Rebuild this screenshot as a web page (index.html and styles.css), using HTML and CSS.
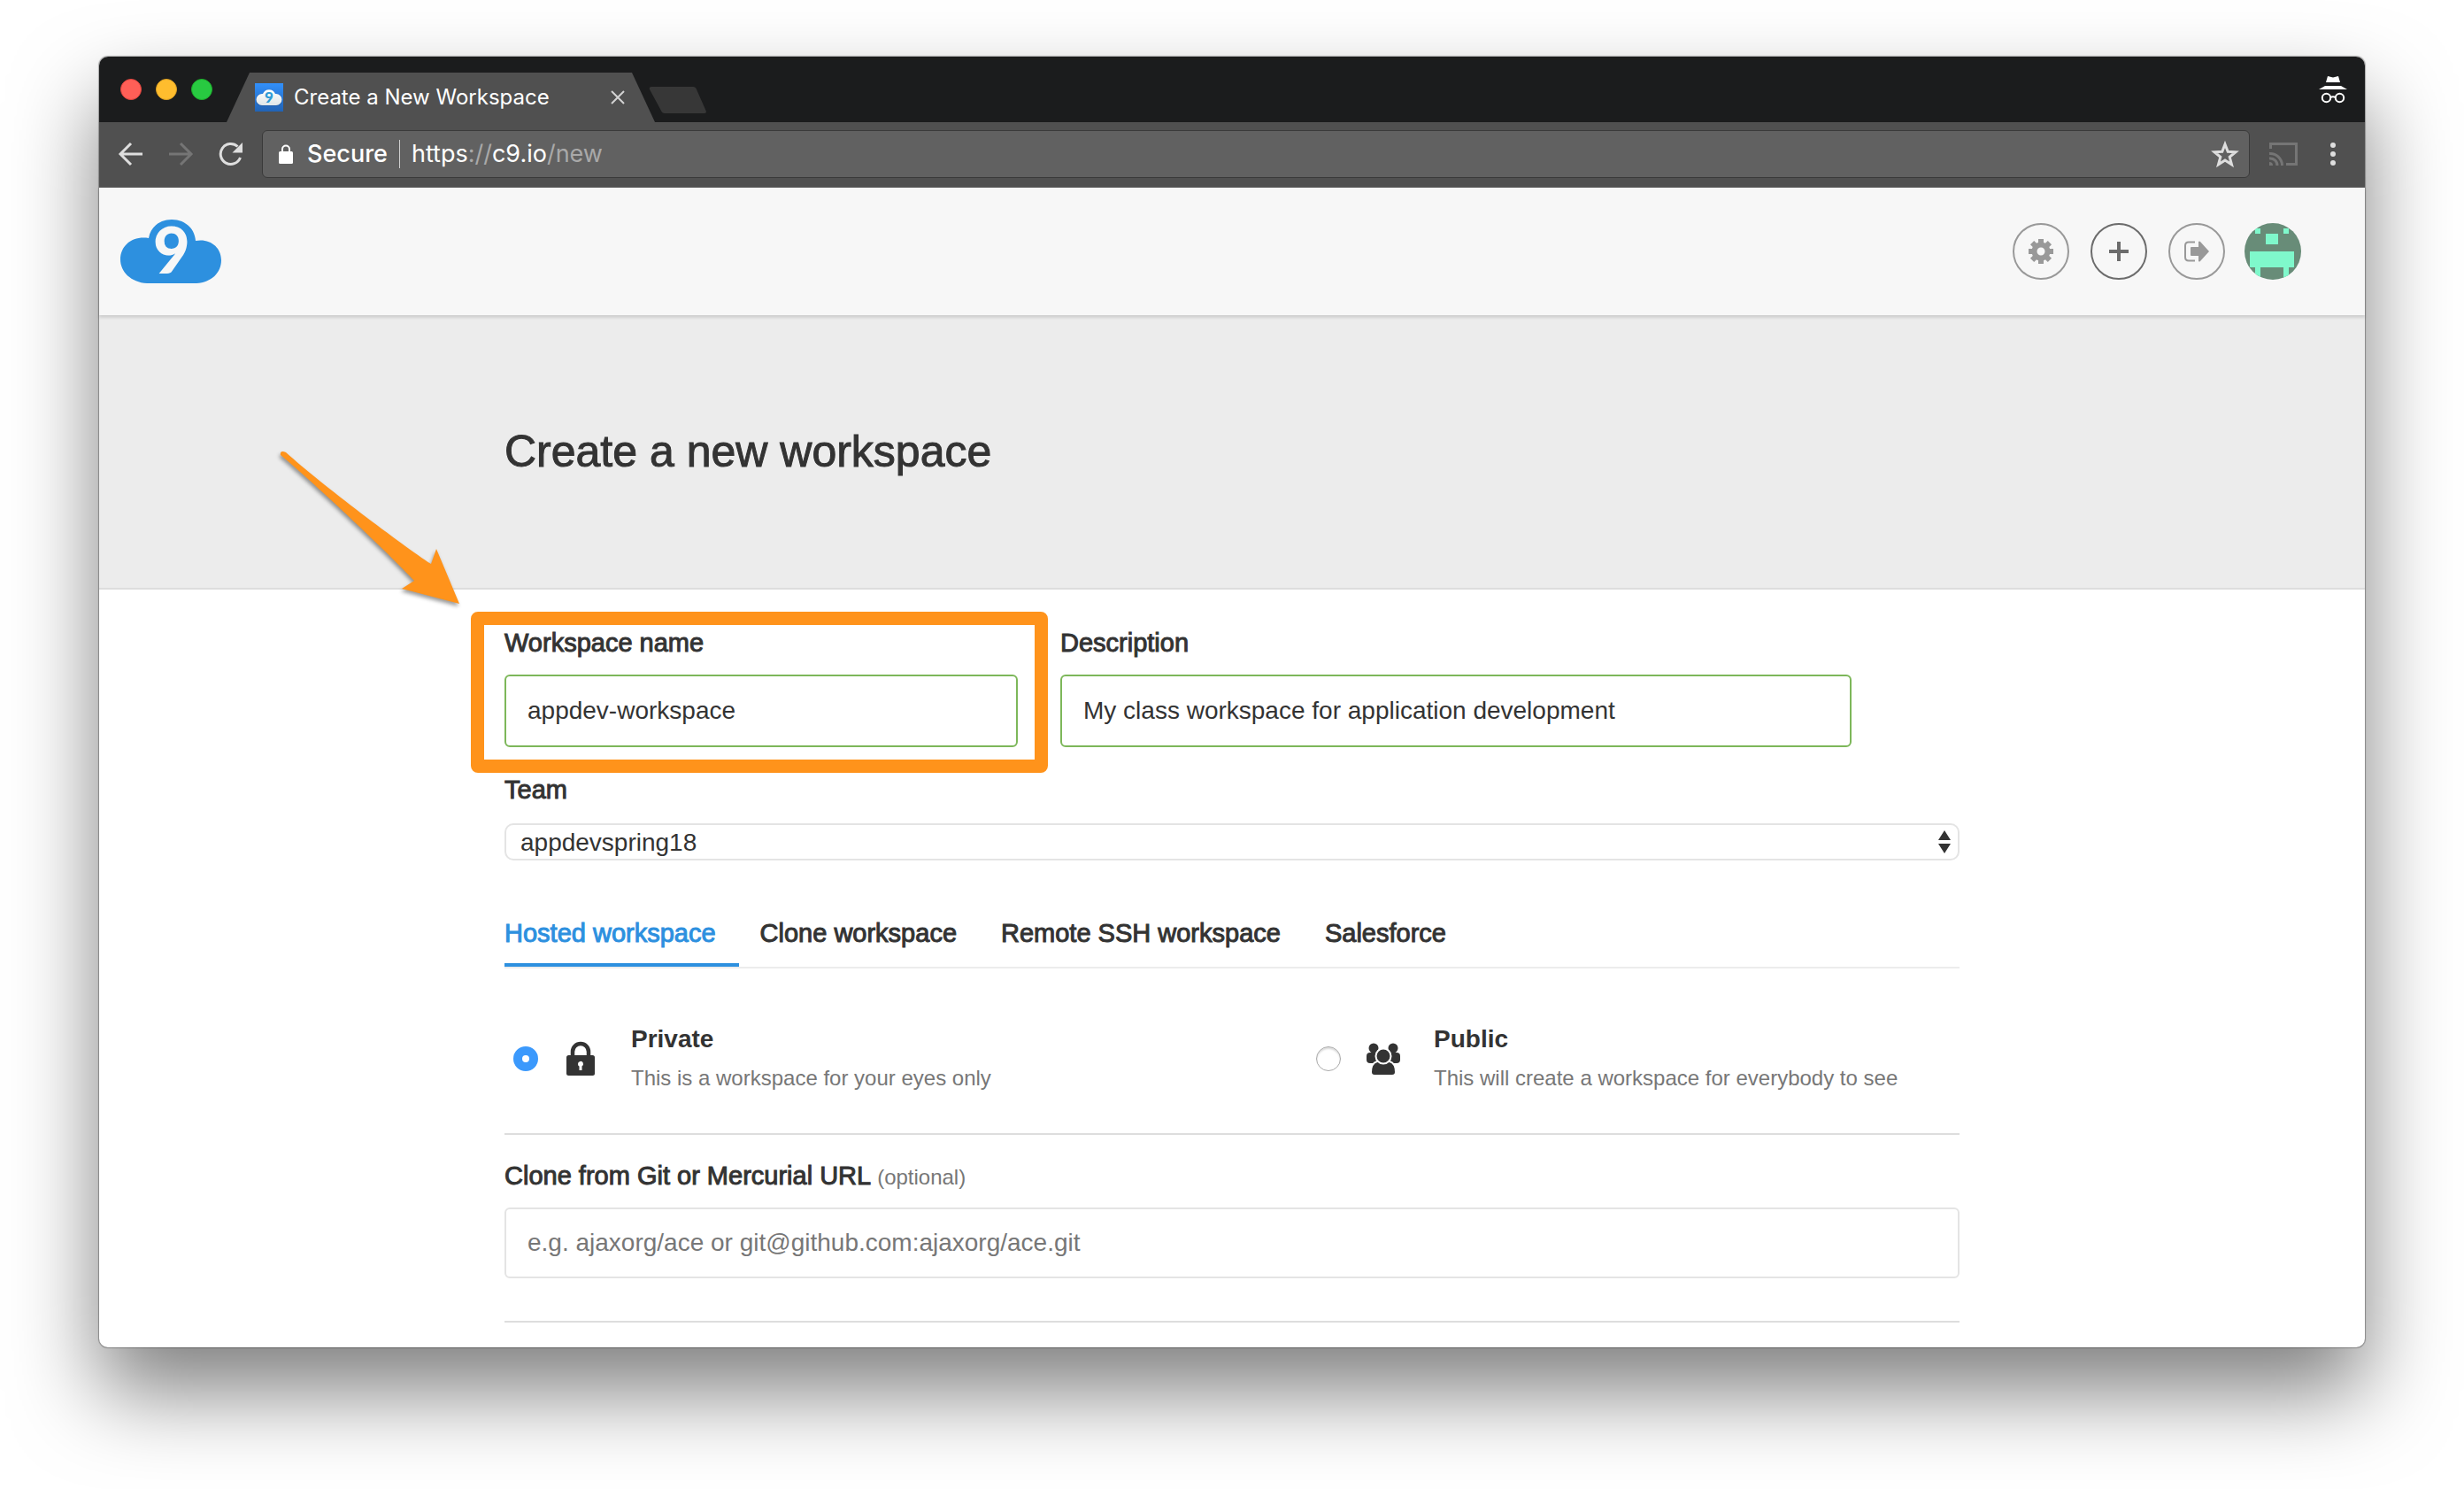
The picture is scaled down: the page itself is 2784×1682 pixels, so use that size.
FILE: index.html
```html
<!DOCTYPE html>
<html lang="en">
<head>
<meta charset="utf-8">
<title>Create a New Workspace</title>
<link rel="stylesheet" href="styles.css">
</head>
<body>
<div class="window">
  <div class="titlebar">
    <div class="lights">
      <button class="light light-close" aria-label="Close window"></button>
      <button class="light light-min" aria-label="Minimize window"></button>
      <button class="light light-max" aria-label="Zoom window"></button>
    </div>
    <div class="tab">
      <svg class="favicon" width="32" height="32" viewBox="0 0 32 32" aria-hidden="true">
        <defs>
          <linearGradient id="sky" x1="0" y1="0" x2="0" y2="1"><stop offset="0" stop-color="#3290fb"/><stop offset="1" stop-color="#2263b4"/></linearGradient>
          <linearGradient id="puff" x1="0" y1="0" x2="0" y2="1"><stop offset="0" stop-color="#fff"/><stop offset="1" stop-color="#dfe6e8"/></linearGradient>
        </defs>
        <rect width="32" height="32" fill="url(#sky)"/>
        <path d="M8 26a7 7 0 0 1 0-14h1a7.500 7.500 0 0 1 14 0h1a7 7 0 0 1 0 14z" fill="#1c549c" opacity=".6"/>
        <path d="M8 25a6.500 6.500 0 0 1 0-13h1a7.500 7.500 0 0 1 14 0h1a6.500 6.500 0 0 1 0 13z" fill="url(#puff)"/>
        <text class="mark" x="16" y="22" text-anchor="middle" font-size="17" fill="#2f9bd6">9</text>
      </svg>
      <span class="tab-title">Create a New Workspace</span>
      <button class="icon-button" aria-label="Close tab">
        <svg width="16" height="16" viewBox="0 0 16 16"><path d="M1 1l14 14M15 1L1 15" stroke="#d2d2d2" stroke-width="2"/></svg>
      </button>
    </div>
    <button class="icon-button new-tab" aria-label="New tab">
      <svg width="64" height="30" viewBox="0 0 64 30"><path d="M2 0h47q3 0 4 3l11 25q0 2-2 2H17q-3 0-4-3L0 3q-1-3 2-3z" fill="#373737"/></svg>
    </button>
    <svg class="incognito" width="32" height="30" viewBox="0 0 32 30" aria-hidden="true">
      <path d="M10 0l6 1.500L22 0l2 7H8zM7 11h18l7 4H0z" fill="#fff"/>
      <g fill="none" stroke="#fff" stroke-width="2"><circle cx="8.500" cy="24.500" r="4.700"/><circle cx="23.500" cy="24.500" r="4.700"/><path d="M13 24q3-1.500 6 0"/></g>
    </svg>
  </div>

  <div class="toolbar">
    <div class="nav">
      <button class="icon-button" aria-label="Back"><svg width="28" height="28" viewBox="0 0 28 28"><path d="M27 14H3M14 2L2 14l12 12" fill="none" stroke="#dedede" stroke-width="3"/></svg></button>
      <button class="icon-button" aria-label="Forward"><svg width="28" height="28" viewBox="0 0 28 28"><path d="M1 14h24M14 2l12 12-12 12" fill="none" stroke="#757575" stroke-width="3"/></svg></button>
      <button class="icon-button" aria-label="Reload"><svg width="28" height="28" viewBox="0 0 28 28"><path d="M22.500 5.500A11.500 11.500 0 1 0 25.500 18" fill="none" stroke="#dedede" stroke-width="3"/><path d="M28 1v11.500H16.500z" fill="#dedede"/></svg></button>
    </div>
    <div class="omnibox">
      <svg width="16" height="22" viewBox="0 0 16 22" aria-hidden="true"><rect y="8" width="16" height="14" rx="1.500" fill="#fff"/><path d="M4 9V5.500a4 4 0 0 1 8 0V9" fill="none" stroke="#fff" stroke-width="2"/></svg>
      <span class="secure">Secure</span>
      <span class="divider"></span>
      <span class="url">https<span class="dim">://</span>c9.io<span class="dim">/new</span></span>
      <button class="icon-button" aria-label="Bookmark this page"><svg width="30" height="30" viewBox="0 0 30 30"><path d="M15 4l3.200 8.200 8.800.5-6.800 5.600 2.300 8.500-7.500-4.800-7.500 4.800 2.300-8.500L3 12.700l8.800-.5z" fill="none" stroke="#dedede" stroke-width="3"/></svg></button>
    </div>
    <button class="icon-button" aria-label="Cast"><svg width="32" height="26" viewBox="0 0 32 26"><g fill="none" stroke="#757575" stroke-width="3"><path d="M1.500 7V1.500h29v23H19"/><path d="M0 12.500A13.500 13.500 0 0 1 14.500 26M0 18a8 8 0 0 1 9 8"/></g><path d="M0 22a4 4 0 0 1 4 4H0z" fill="#757575"/></svg></button>
    <button class="icon-button kebab" aria-label="Menu"><svg width="8" height="28" viewBox="0 0 8 28"><g fill="#dedede"><circle cx="4" cy="4" r="3"/><circle cx="4" cy="14" r="3"/><circle cx="4" cy="24" r="3"/></g></svg></button>
  </div>

  <header class="site-header">
    <a class="logo" href="#" aria-label="Cloud9">
      <svg width="114" height="72" viewBox="0 0 114 72"><path d="M30 72C12 71 0 59 0 45c0-16 14-27 32-24C34 8 45 0 58 0c15 0 26 10 27 24 16-3 29 7 29 22 0 14-11 25-28 26z" fill="#2d90df"/><text class="mark" x="58" y="61" text-anchor="middle" font-size="72" fill="#f7f7f7">9</text></svg>
    </a>
    <nav class="actions" aria-label="Account">
      <button class="round" aria-label="Settings"><svg width="28" height="28" viewBox="0 0 28 28"><circle cx="14" cy="14" r="7.500" fill="none" stroke="currentColor" stroke-width="6"/><path d="M14 0v5M14 23v5M0 14h5M23 14h5M4.100 4.100l3.500 3.500M20.400 20.400l3.500 3.500M4.100 23.900l3.500-3.500M20.400 7.600l3.500-3.500" stroke="currentColor" stroke-width="6"/></svg></button>
      <button class="round round-dark" aria-label="Create"><svg width="22" height="22" viewBox="0 0 22 22"><path d="M11 0v22M0 11h22" stroke="currentColor" stroke-width="4"/></svg></button>
      <button class="round" aria-label="Sign out"><svg width="28" height="24" viewBox="0 0 28 24"><path d="M12 1.500H5q-4 0-4 4v13q0 4 4 4h7" fill="none" stroke="currentColor" stroke-width="2"/><path d="M8 7h8V1q1-1 2 0l10 11-10 11q-1 1-2 0v-6H8q-1 0-1-1V8q0-1 1-1z" fill="currentColor"/></svg></button>
    </nav>
    <a class="avatar" href="#" aria-label="Profile">
      <svg width="64" height="64" viewBox="0 0 64 64"><rect width="64" height="64" fill="#688c78"/><path d="M12 6h6v6h-6zM44 6h6v6h-6zM24 12h14v12H24zM6 32h50v18h-6v14h-6V50H18v14h-6V50H6z" fill="#7ff8cb"/></svg>
    </a>
  </header>

  <section class="banner">
    <h1 class="container">Create a new workspace</h1>
  </section>

  <form class="container form">
    <div class="fields">
      <div class="field highlighted">
        <label for="name">Workspace name</label>
        <input class="text valid" id="name" type="text" value="appdev-workspace">
        <svg class="arrow" width="208" height="184" viewBox="0 0 208 184" aria-hidden="true"><path d="M8 5C48 41 140 110 172 131l6-17 26 62-65-17 14-9C125 120 46 45 2 8Q1 2 8 5z" fill="#ff931b"/></svg>
      </div>
      <div class="field">
        <label for="description">Description</label>
        <input class="text valid" id="description" type="text" value="My class workspace for application development">
      </div>
    </div>

    <div class="field">
      <label for="team">Team</label>
      <div class="select-wrap">
        <select id="team"><option>appdevspring18</option></select>
        <svg class="carets" width="14" height="26" viewBox="0 0 14 26" aria-hidden="true"><path d="M7 0l7 11H0zM0 15h14L7 26z" fill="#333"/></svg>
      </div>
    </div>

    <nav class="tabs" aria-label="Workspace type">
      <a class="active" href="#">Hosted workspace</a>
      <a href="#">Clone workspace</a>
      <a href="#">Remote SSH workspace</a>
      <a href="#">Salesforce</a>
    </nav>

    <div class="choices">
      <label class="choice">
        <input type="radio" name="access" checked>
        <svg width="40" height="38" viewBox="0 0 40 38" aria-hidden="true"><rect x="4" y="15" width="32" height="23" rx="2.500" fill="#333"/><path d="M11 16v-5a9 9 0 0 1 18 0v5" fill="none" stroke="#333" stroke-width="4.500"/><path d="M17 25a3 3 0 1 1 4.500 2.500V32h-3v-4.500Q17 27 17 25z" fill="#fff"/></svg>
        <span class="choice-text"><strong>Private</strong><span class="hint">This is a workspace for your eyes only</span></span>
      </label>
      <label class="choice">
        <input type="radio" name="access">
        <svg width="40" height="38" viewBox="0 0 40 38" aria-hidden="true"><g fill="#333"><circle cx="9" cy="7" r="5.500"/><circle cx="31" cy="7" r="5.500"/><rect x="1" y="12" width="13" height="12" rx="4"/><rect x="26" y="12" width="13" height="12" rx="4"/><g stroke="#fff" stroke-width="2"><path d="M13 22h14q7 2 7 12 0 4-4 4H10q-4 0-4-4 0-10 7-12z"/><circle cx="20" cy="16" r="8.500"/></g></g></svg>
        <span class="choice-text"><strong>Public</strong><span class="hint">This will create a workspace for everybody to see</span></span>
      </label>
    </div>

    <div class="field clone">
      <label for="clone">Clone from Git or Mercurial URL <span class="hint">(optional)</span></label>
      <input class="text" id="clone" type="text" placeholder="e.g. ajaxorg/ace or git@github.com:ajaxorg/ace.git">
    </div>
  </form>
</div>
</body>
</html>
```
FILE: styles.css
```css
* { box-sizing: border-box; }

body {
  margin: 0;
  padding: 64px 112px 160px;
  background: #fff;
  color: #333;
  font-family: "Liberation Sans", Arial, sans-serif;
  font-size: 28px;
  line-height: 40px;
}

button, input, select { font: inherit; color: inherit; }
svg { display: block; flex: none; overflow: visible; }
.mark { font-family: Lato, sans-serif; font-weight: 900; line-height: 1; }

.window {
  border-radius: 10px;
  background: #fff;
  box-shadow: 0 0 1px 1px rgba(0, 0, 0, .3), 0 50px 96px rgba(0, 0, 0, .5);
}

/* Browser chrome */
.icon-button {
  display: flex;
  padding: 0;
  border: 0;
  background: none;
}

.titlebar {
  display: flex;
  align-items: flex-end;
  height: 74px;
  padding: 0 20px 0 24px;
  border-radius: 10px 10px 0 0;
  background: #1b1c1d;
  font-family: Inter, sans-serif;
}
.lights { display: flex; gap: 16px; align-self: center; margin-right: 16px; }
.light { width: 24px; height: 24px; padding: 0; border: 1px solid; border-radius: 50%; }
.light-close { background: #ff5f57; border-color: #e0443e; }
.light-min { background: #ffbd2e; border-color: #dea123; }
.light-max { background: #28ca41; border-color: #1dad2b; }

.tab {
  display: flex;
  align-items: center;
  gap: 12px;
  width: 484px;
  height: 56px;
  padding: 0 34px 0 32px;
  background: #505050;
  clip-path: polygon(26px 0, calc(100% - 26px) 0, 100% 100%, 0 100%);
}
.tab-title { flex: 1; color: #fff; font-size: 24px; white-space: nowrap; }
.new-tab { margin: 0 0 10px -6px; }
.incognito { align-self: center; margin-left: auto; }

.toolbar {
  display: flex;
  align-items: center;
  height: 74px;
  padding: 0 32px 2px 22px;
  border-bottom: 1px solid #5c5c5c;
  background: #505050;
  font-family: Inter, sans-serif;
  font-size: 27px;
}
.nav { display: flex; gap: 28px; margin-right: 22px; }
.omnibox {
  flex: 1;
  display: flex;
  align-items: center;
  height: 54px;
  margin-right: 22px;
  padding: 0 12px 0 18px;
  border: 1px solid #3a3a3a;
  border-radius: 6px;
  background: #616161;
  color: #fff;
}
.secure { margin-left: 16px; font-weight: 500; }
.divider { width: 1px; height: 32px; margin: 0 13px; background: #d0d0d0; }
.url { flex: 1; }
.dim { color: #a9a9a9; }
.kebab { margin-left: 36px; }

/* Site header */
.site-header {
  position: relative;
  display: flex;
  align-items: center;
  height: 144px;
  padding: 0 72px 0 24px;
  background: #f7f7f7;
  box-shadow: 0 3px 3px rgba(0, 0, 0, .12);
}
.actions { display: flex; gap: 24px; margin: 0 22px 0 auto; }
.round {
  display: flex;
  align-items: center;
  justify-content: center;
  width: 64px;
  height: 64px;
  padding: 0;
  border: 2px solid #999;
  border-radius: 50%;
  background: none;
  color: #999;
}
.round-dark { border-color: #6c6c6c; color: #6c6c6c; }
.avatar { overflow: hidden; border-radius: 50%; }

.banner { padding: 124px 0; border-bottom: 2px solid #ddd; background: #ececec; }
.container { width: 100%; max-width: 1644px; margin: 0 auto; }
h1 { font-size: 50px; font-weight: 400; line-height: 60px; -webkit-text-stroke: 1px #333; }

/* Form */
.form { padding: 40px 0 28px; }
.fields { display: grid; grid-template-columns: 580fr 894fr 74fr; column-gap: 48px; margin-bottom: 28px; }
.field { display: flex; flex-direction: column; gap: 16px; }
.field > label, .tabs a { font-size: 29px; -webkit-text-stroke: 1px currentColor; }
.hint { color: #777; font-size: 24px; -webkit-text-stroke: 0; }
label > .hint { line-height: 1; }

.text {
  width: 100%;
  height: 80px;
  padding: 0 24px;
  border: 2px solid #e4e4e4;
  border-radius: 6px;
  background: #fff;
  outline: 0;
}
.text.valid { height: 82px; border-color: #7db75a; }
.text::placeholder { color: #777; opacity: 1; }

.highlighted { position: relative; }
.highlighted::after {
  content: "";
  position: absolute;
  inset: -15px -34px -29px -38px;
  border: 15px solid #ff931b;
  border-radius: 8px;
  pointer-events: none;
}
.arrow {
  position: absolute;
  top: -200px;
  left: -255px;
  filter: drop-shadow(-1px 3px 2px rgba(0, 0, 0, .4));
  pointer-events: none;
}

.select-wrap { position: relative; margin-top: 2px; }
select {
  appearance: none;
  display: block;
  width: 100%;
  height: 42px;
  padding: 0 40px 2px 16px;
  border: 2px solid #e4e4e4;
  border-radius: 10px;
  background: #fff;
}
.carets { position: absolute; top: 8px; right: 10px; pointer-events: none; }

.tabs { display: flex; gap: 24px; margin-top: 62px; border-bottom: 2px solid #ececec; }
.tabs a {
  padding: 0 26px 14px 0;
  border-bottom: 4px solid transparent;
  color: #333;
  text-decoration: none;
}
.tabs .active { border-color: #2d90df; color: #2d90df; }

.choices {
  display: grid;
  grid-template-columns: 907fr 737fr;
  padding: 60px 0 42px;
  border-bottom: 2px solid #ddd;
}
.choice { display: flex; align-items: center; padding-left: 10px; }
.choice input {
  appearance: none;
  width: 28px;
  height: 28px;
  margin: 0 28px 0 0;
  border: 1px solid #aaa;
  border-radius: 50%;
  background: #fff;
  box-shadow: inset 0 2px 2px rgba(0, 0, 0, .15);
}
.choice input:checked {
  border: 10px solid #3b99fc;
  box-shadow: none;
}
.choice-text { display: flex; flex-direction: column; gap: 4px; margin-left: 37px; }

.clone { padding: 26px 0 48px; border-bottom: 2px solid #ddd; }
```
